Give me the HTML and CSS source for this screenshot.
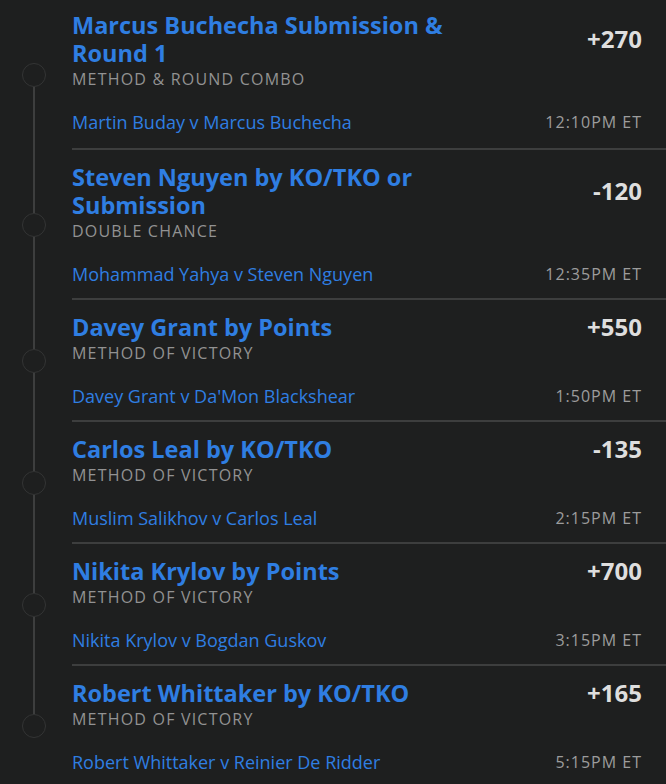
FILE: index.html
```html
<!DOCTYPE html>
<html lang="en">
<head>
    <meta charset="UTF-8">
    <meta name="viewport" content="width=device-width, initial-scale=1.0">
    <title>Parlay Legs</title>
    <link rel="stylesheet" href="styles.css">
</head>
<body>
    <div class="legs">
        <div class="leg">
            <div class="rail"><span class="dot"></span></div>
            <div class="leg-body">
                <div class="pick">
                    <h2>Marcus Buchecha Submission &amp; Round 1</h2>
                    <span class="odds">+270</span>
                </div>
                <p class="market">Method &amp; Round Combo</p>
                <div class="event">
                    <a href="#">Martin Buday v Marcus Buchecha</a>
                    <span class="time">12:10PM ET</span>
                </div>
            </div>
        </div>
        <div class="leg">
            <div class="rail"><span class="dot"></span></div>
            <div class="leg-body">
                <div class="pick">
                    <h2>Steven Nguyen by KO/TKO or Submission</h2>
                    <span class="odds">-120</span>
                </div>
                <p class="market">Double Chance</p>
                <div class="event">
                    <a href="#">Mohammad Yahya v Steven Nguyen</a>
                    <span class="time">12:35PM ET</span>
                </div>
            </div>
        </div>
        <div class="leg">
            <div class="rail"><span class="dot"></span></div>
            <div class="leg-body">
                <div class="pick">
                    <h2>Davey Grant by Points</h2>
                    <span class="odds">+550</span>
                </div>
                <p class="market">Method of Victory</p>
                <div class="event">
                    <a href="#">Davey Grant v Da'Mon Blackshear</a>
                    <span class="time">1:50PM ET</span>
                </div>
            </div>
        </div>
        <div class="leg">
            <div class="rail"><span class="dot"></span></div>
            <div class="leg-body">
                <div class="pick">
                    <h2>Carlos Leal by KO/TKO</h2>
                    <span class="odds">-135</span>
                </div>
                <p class="market">Method of Victory</p>
                <div class="event">
                    <a href="#">Muslim Salikhov v Carlos Leal</a>
                    <span class="time">2:15PM ET</span>
                </div>
            </div>
        </div>
        <div class="leg">
            <div class="rail"><span class="dot"></span></div>
            <div class="leg-body">
                <div class="pick">
                    <h2>Nikita Krylov by Points</h2>
                    <span class="odds">+700</span>
                </div>
                <p class="market">Method of Victory</p>
                <div class="event">
                    <a href="#">Nikita Krylov v Bogdan Guskov</a>
                    <span class="time">3:15PM ET</span>
                </div>
            </div>
        </div>
        <div class="leg">
            <div class="rail"><span class="dot"></span></div>
            <div class="leg-body">
                <div class="pick">
                    <h2>Robert Whittaker by KO/TKO</h2>
                    <span class="odds">+165</span>
                </div>
                <p class="market">Method of Victory</p>
                <div class="event">
                    <a href="#">Robert Whittaker v Reinier De Ridder</a>
                    <span class="time">5:15PM ET</span>
                </div>
            </div>
        </div>
    </div>
</body>
</html>
```

FILE: styles.css
```css
body {
    margin: 0;
    background-color: #1e1f1f;
    font-family: "Open Sans", Arial, sans-serif;
    color: #ddd;
}
.legs {
    display: flex;
    flex-direction: column;
}
.leg {
    display: flex;
}
/* timeline rail: line above and below the dot */
.rail {
    width: 72px;
    flex-shrink: 0;
    display: flex;
    flex-direction: column;
    align-items: center;
    padding-right: 4px;
    box-sizing: border-box;
}
.rail::before, .rail::after {
    content: "";
    flex: 1;
    width: 2px;
    background-color: #3d3e3e;
}
.leg:first-child .rail::before,
.leg:last-child .rail::after {
    background-color: transparent;
}
.dot {
    width: 22px;
    height: 22px;
    border: 1px solid #333434;
    border-radius: 50%;
    flex-shrink: 0;
}
.leg-body {
    flex: 1;
    padding: 13px 24px 12px 0;
    border-bottom: 2px solid #3d3e3e;
}
.leg:first-child .leg-body {
    padding-top: 11px;
    padding-bottom: 14px;
}
.leg:last-child .leg-body {
    border-bottom: none;
}
.pick {
    display: flex;
    justify-content: space-between;
    align-items: center;
}
.pick h2 {
    max-width: 420px;
    margin: 0;
    font-size: 23.5px;
    line-height: 28px;
    font-weight: 700;
    color: #2f7ee2;
}
.market {
    margin: 0;
    font-size: 16px;
    line-height: 24px;
    text-transform: uppercase;
    letter-spacing: 1.2px;
    color: #929292;
}
.odds {
    font-size: 24px;
    line-height: 28px;
    font-weight: 700;
    color: #dedede;
}
.event {
    display: flex;
    justify-content: space-between;
    align-items: center;
    margin-top: 19px;
    font-size: 18px;
    line-height: 24px;
}
.event a {
    color: #2f7ee2;
    text-decoration: none;
}
.time {
    font-size: 16px;
    color: #9c9c9c;
    letter-spacing: 1px;
}
```
